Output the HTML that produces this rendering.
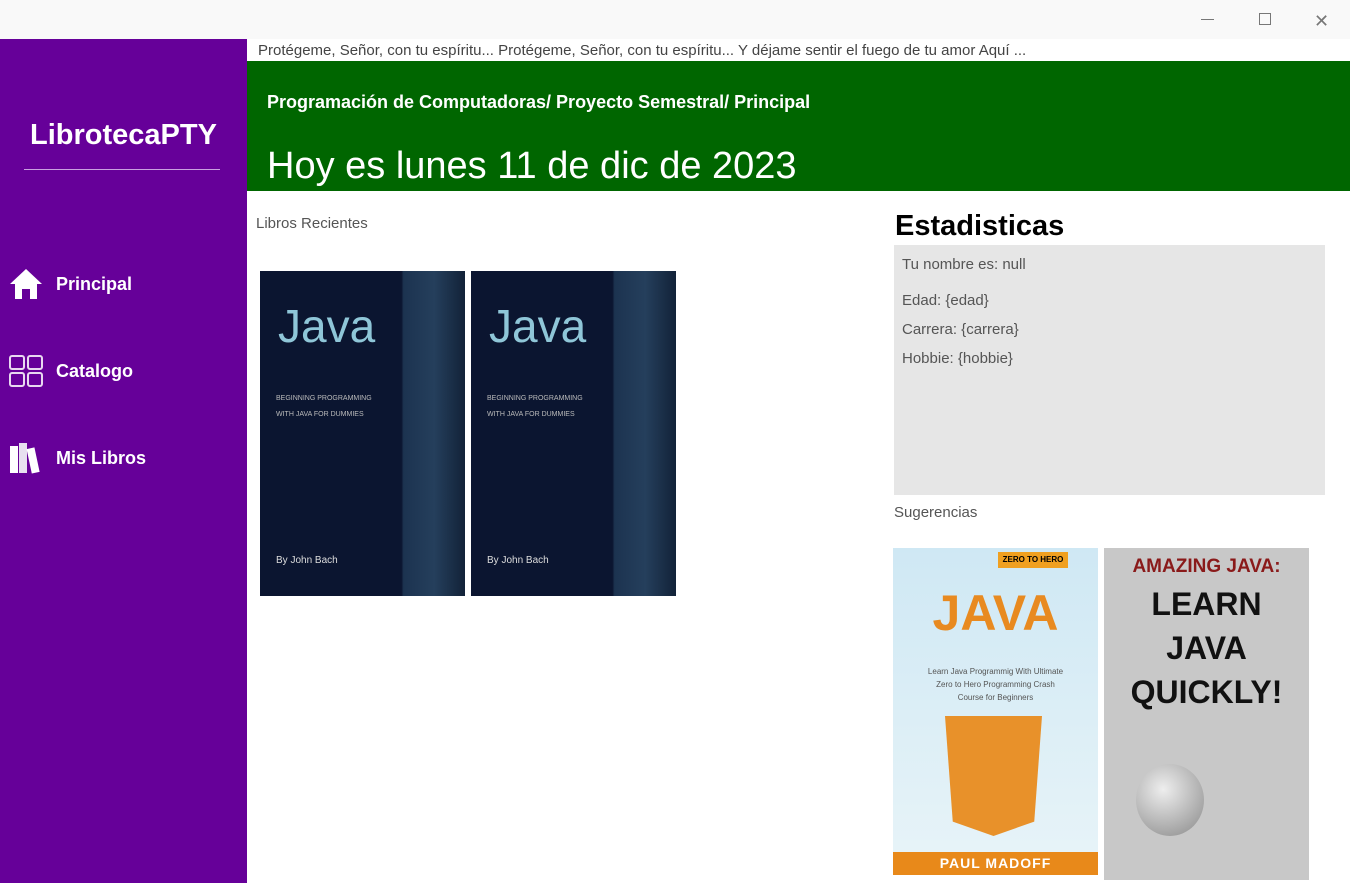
<!DOCTYPE html>
<html><head><meta charset="utf-8"><style>
*{margin:0;padding:0;box-sizing:border-box}
body{width:1350px;height:883px;overflow:hidden;background:#fff;font-family:"Liberation Sans",sans-serif;position:relative}
.abs{position:absolute}
.tb{left:0;top:0;width:1350px;height:39px;background:#f9f9f9}
.side{left:0;top:39px;width:247px;height:844px;background:#660099;color:#fff}
.nav{position:absolute;left:56px;font-weight:bold;font-size:18px;color:#fff}
.green{left:247px;top:61px;width:1103px;height:130px;background:#006600;color:#fff}
.lbl{color:#555;font-size:15px}
</style></head><body>
<div class="abs tb">
<div class="abs" style="left:1201px;top:19px;width:13px;height:1px;background:#777"></div>
<div class="abs" style="left:1259px;top:13px;width:12px;height:12px;border:1px solid #777"></div>
<div class="abs" style="left:1314px;top:11px;font-size:18px;color:#777">✕</div>
</div>
<div class="abs side">
<div class="abs" style="left:0;width:247px;top:80px;text-align:center;font-size:29px;font-weight:bold">LibrotecaPTY</div>
<div class="abs" style="left:24px;top:130px;width:196px;height:1px;background:#c9a0e0"></div>
<div class="abs" style="left:247px;top:206px;width:3px;height:78px;background:#fff"></div>
<svg class="abs" style="left:9px;top:229px" width="34" height="32" viewBox="0 0 34 32"><path d="M17 1 L1 16 L6 16 L6 31 L13 31 L13 21 L21 21 L21 31 L28 31 L28 16 L33 16 Z" fill="#fff"/></svg>
<div class="nav" style="top:235px">Principal</div>
<svg class="abs" style="left:9px;top:316px" width="34" height="32" viewBox="0 0 34 32" fill="none" stroke="#e8d8f0" stroke-width="2"><rect x="1" y="1" width="14" height="13" rx="2"/><rect x="19" y="1" width="14" height="13" rx="2"/><rect x="1" y="18" width="14" height="13" rx="2"/><rect x="19" y="18" width="14" height="13" rx="2"/></svg>
<div class="nav" style="top:322px">Catalogo</div>
<svg class="abs" style="left:9px;top:403px" width="34" height="32" viewBox="0 0 34 32"><rect x="1" y="4" width="8" height="27" fill="#fff"/><rect x="10" y="1" width="8" height="30" fill="#e8e0f0"/><rect x="20" y="6" width="8" height="25" fill="#fff" transform="rotate(-12 24 18)"/></svg>
<div class="nav" style="top:409px">Mis Libros</div>
</div>
<div class="abs" style="left:258px;top:42px;font-size:15px;color:#444;white-space:nowrap">Protégeme, Señor, con tu espíritu... Protégeme, Señor, con tu espíritu... Y déjame sentir el fuego de tu amor Aquí ...</div>
<div class="abs green">
<div class="abs" style="left:20px;top:31px;font-size:18px;font-weight:bold">Programación de Computadoras/ Proyecto Semestral/ Principal</div>
<div class="abs" style="left:20px;top:84px;font-size:38px">Hoy es lunes 11 de dic de 2023</div>
</div>
<div class="abs lbl" style="left:256px;top:215px">Libros Recientes</div>
<div class="abs" style="left:260px;top:271px;width:205px;height:325px;background:linear-gradient(90deg,#0b1530 0,#0b1530 69%,#1c3350 70%,#253f5c 85%,#122238 100%)"><div class="abs" style="left:18px;top:28px;font-size:46px;color:#8fc6d8">Java</div><div class="abs" style="left:16px;top:120px;font-size:7px;color:#bbb;line-height:16px">BEGINNING PROGRAMMING<br>WITH JAVA FOR DUMMIES</div><div class="abs" style="left:16px;top:284px;font-size:10px;color:#ddd">By John Bach</div></div>
<div class="abs" style="left:471px;top:271px;width:205px;height:325px;background:linear-gradient(90deg,#0b1530 0,#0b1530 69%,#1c3350 70%,#253f5c 85%,#122238 100%)"><div class="abs" style="left:18px;top:28px;font-size:46px;color:#8fc6d8">Java</div><div class="abs" style="left:16px;top:120px;font-size:7px;color:#bbb;line-height:16px">BEGINNING PROGRAMMING<br>WITH JAVA FOR DUMMIES</div><div class="abs" style="left:16px;top:284px;font-size:10px;color:#ddd">By John Bach</div></div>
<div class="abs" style="left:895px;top:210px;font-size:29px;font-weight:bold;color:#000">Estadisticas</div>
<div class="abs" style="left:894px;top:245px;width:431px;height:250px;background:#e6e6e6;color:#555;font-size:15px">
<div class="abs" style="left:8px;top:11px">Tu nombre es: null</div>
<div class="abs" style="left:8px;top:47px">Edad: {edad}</div>
<div class="abs" style="left:8px;top:76px">Carrera: {carrera}</div>
<div class="abs" style="left:8px;top:105px">Hobbie: {hobbie}</div>
</div>
<div class="abs lbl" style="left:894px;top:504px">Sugerencias</div>
<div class="abs" style="left:893px;top:548px;width:205px;height:327px;background:linear-gradient(#cfe8f4,#e8f4f8)">
<div class="abs" style="left:105px;top:4px;width:70px;height:16px;background:#f0a020;font-size:8px;font-weight:bold;text-align:center;line-height:16px">ZERO TO HERO</div>
<div class="abs" style="left:0;width:205px;top:36px;text-align:center;font-size:50px;font-weight:bold;color:#e88a20">JAVA</div>
<div class="abs" style="left:0;width:205px;top:117px;text-align:center;font-size:8px;color:#555;line-height:13px">Learn Java Programmig With Ultimate<br>Zero to Hero Programming Crash<br>Course for Beginners</div>
<div class="abs" style="left:52px;top:168px;width:97px;height:120px;background:#e8912a;clip-path:polygon(0 0,100% 0,92% 88%,50% 100%,8% 88%)"></div>
<div class="abs" style="left:0;top:304px;width:205px;height:23px;background:#e8891a;color:#fff;font-weight:bold;font-size:14px;text-align:center;line-height:23px;letter-spacing:1px">PAUL MADOFF</div>
</div>
<div class="abs" style="left:1104px;top:548px;width:205px;height:332px;background:#c8c8c8">
<div class="abs" style="left:0;width:205px;top:8px;text-align:center;font-size:19px;font-weight:bold;color:#8a1a1a">AMAZING JAVA:</div>
<div class="abs" style="left:0;width:205px;top:34px;text-align:center;font-size:32px;font-weight:bold;color:#111;line-height:44px">LEARN<br>JAVA<br>QUICKLY!</div>
<div class="abs" style="left:32px;top:216px;width:68px;height:72px;border-radius:50%;background:radial-gradient(circle at 40% 35%,#eee,#888)"></div>
</div>
</body></html>
